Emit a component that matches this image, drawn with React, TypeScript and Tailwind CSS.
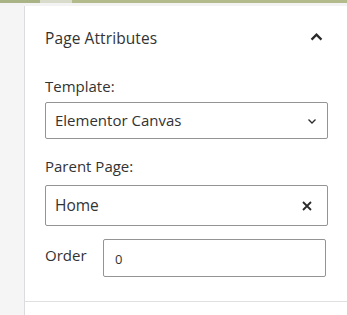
export default function App() {
  return (
    <div
      className="w-[347px] h-[315px] overflow-hidden bg-white flex flex-col"
      style={{ fontFamily: '"Open Sans", "Noto Sans", sans-serif' }}
    >
      {/* top image edge */}
      <div className="h-[3px] flex shrink-0">
        <div className="w-[40px] bg-[#a9b385]" />
        <div className="w-[32px] bg-[#d9dccb]" />
        <div className="flex-1 bg-[#b3bb8c]" />
      </div>
      <div className="h-[3px] bg-[#f3f3f3] shrink-0" />
      <div className="flex flex-1">
        <div className="w-[25px] bg-[#f5f5f5] border-r border-[#dcdcde] shrink-0" />
        <div className="flex-1 flex flex-col">
          <div className="pl-[20px] pr-[19px] border-b border-[#e0e0e0] pb-[24px] text-[#333]">
            {/* header */}
            <div className="flex items-center justify-between h-[66px]">
              <span className="text-[15.5px] tracking-[0.1px]">Page Attributes</span>
              <svg width="17" height="17" viewBox="0 0 24 24" className="mr-[3px] -mt-[4px]">
                <path d="M5 15l7-7 7 7" fill="none" stroke="#2a2a2a" strokeWidth="3.2" />
              </svg>
            </div>

            {/* template */}
            <div className="mt-[4px] text-[15px] leading-[20px]">Template:</div>
            <div className="mt-[6px] h-[37px] border border-[#949494] rounded-[2px] flex items-center justify-between pl-[9px] pr-[9px]">
              <span className="text-[15px]">Elementor Canvas</span>
              <svg width="12" height="12" viewBox="0 0 24 24">
                <path d="M5 9l7 7 7-7" fill="none" stroke="#2a2a2a" strokeWidth="2.6" />
              </svg>
            </div>

            {/* parent page */}
            <div className="mt-[17px] text-[15px] leading-[20px]">Parent Page:</div>
            <div className="mt-[9px] h-[41px] border border-[#949494] rounded-[2px] flex items-center justify-between pl-[9px] pr-[14px]">
              <span className="text-[15.5px]">Home</span>
              <svg width="12" height="12" viewBox="0 0 24 24">
                <path d="M4 4l16 16M20 4L4 20" fill="none" stroke="#2a2a2a" strokeWidth="3.6" />
              </svg>
            </div>

            {/* order */}
            <div className="mt-[13px] flex items-center">
              <span className="text-[15px] w-[58px] -mt-[6px]">Order</span>
              <div className="flex-1 h-[38px] border border-[#949494] rounded-[2px] flex items-center pl-[11px] pt-[4px] mr-[2px]">
                <span className="text-[13px]">0</span>
              </div>
            </div>
          </div>
        </div>
      </div>
    </div>
  )
}
